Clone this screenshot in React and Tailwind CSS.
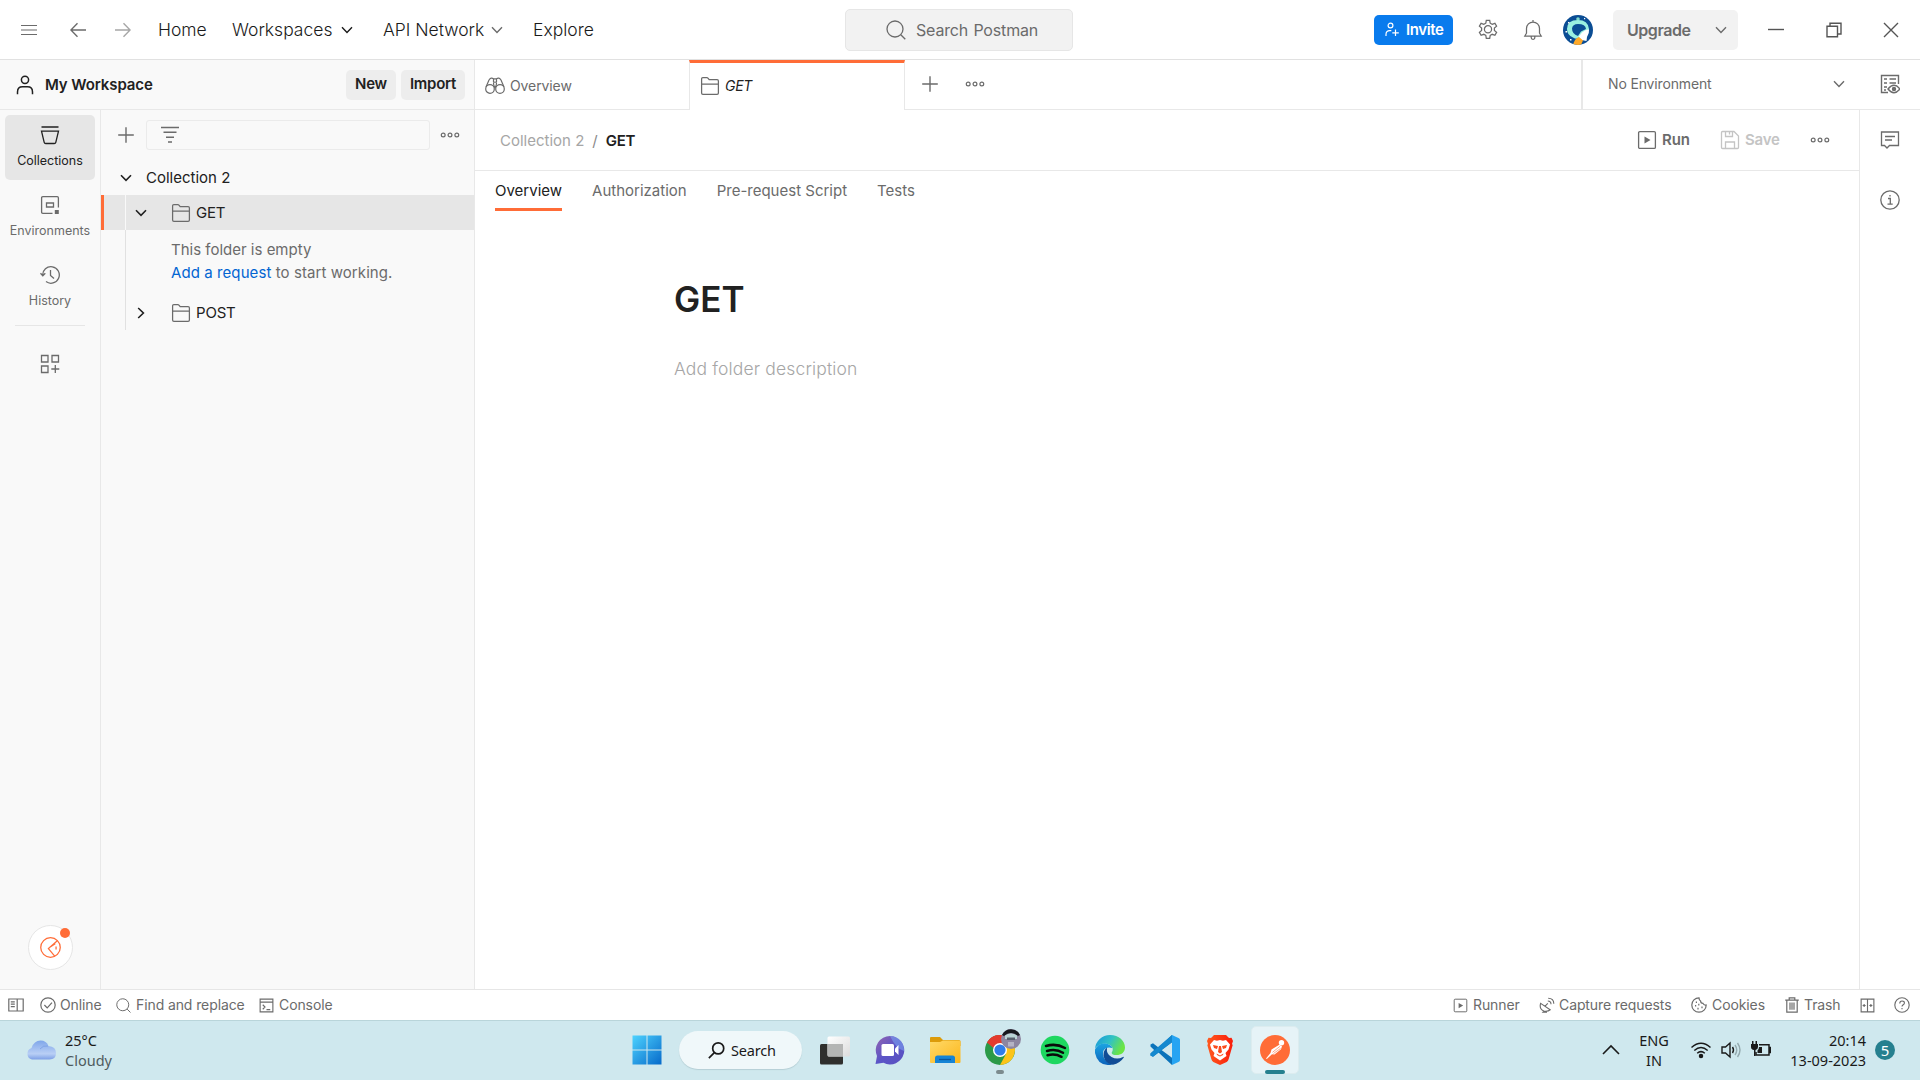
import React from "react";

/* Line icon on a 20x20 grid by default */
function Ico({ s = 20, vb = "0 0 20 20", w = 1.25, c = "", children }) {
  return (
    <svg width={s} height={s} viewBox={vb} fill="none" stroke="currentColor" strokeWidth={w} className={"block shrink-0 " + c}>
      {children}
    </svg>
  );
}

const Chevron = ({ c = "", w = 1.4 }) => (
  <Ico s={12} vb="0 0 12 12" w={w} c={c}><path d="M1 3.2 6 8.4l5-5.2" /></Ico>
);
const Dots = ({ c = "" }) => (
  <Ico c={c} w={1.2}><circle cx="3.2" cy="10" r="1.9" /><circle cx="10" cy="10" r="1.9" /><circle cx="16.8" cy="10" r="1.9" /></Ico>
);
const Plus = ({ c = "" }) => <Ico c={c} w={1.4}><path d="M10 2.2v15.6M2.2 10h15.6" /></Ico>;
const Folder = ({ c = "" }) => (
  <Ico c={c} w={1.25}><path d="M1.6 2.8q0-1.2 1.2-1.2h4.1q.6 0 1 .5l1.3 1.6h7.9q1.3 0 1.3 1.3v12.1q0 1.3-1.3 1.3H2.9q-1.3 0-1.3-1.3zM1.6 8.2h16.8" /></Ico>
);
const PlayBox = ({ s = 20, c = "" }) => (
  <Ico s={s} c={c} w={1.3}><rect x="1.6" y="1.6" width="16.8" height="16.8" rx="1.2" /><path d="M7.5 6.5v7l6-3.5z" fill="currentColor" stroke="none" /></Ico>
);
const SearchIco = ({ s = 20, c = "", w = 1.3 }) => (
  <Ico s={s} c={c} w={w}><circle cx="9" cy="9" r="8" /><path d="m14.8 14.8 4.5 4.5" /></Ico>
);

function TopBar() {
  return (
    <header className="flex h-[60px] shrink-0 items-center border-b border-[#e1e1e1] bg-white text-[17.5px] font-light text-[#1a1a1a]">
      <Ico s={16} vb="0 0 16 16" w={1.2} c="ml-[21px] text-[#6b6b6b]"><path d="M0 3.5h16M0 8h16M0 12.5h16" /></Ico>
      <Ico s={16} vb="0 0 16 16" w={1.4} c="ml-[33px] text-[#6b6b6b]"><path d="M16 8H1M7.5 1.2.9 8l6.6 6.8" /></Ico>
      <Ico s={16} vb="0 0 16 16" w={1.4} c="ml-[29px] text-[#a6a6a6]"><path d="M0 8h15M8.5 1.2 15.1 8l-6.6 6.8" /></Ico>
      <div className="ml-[27px] w-[74px] pt-px">Home</div>
      <div className="w-[109px] pt-px">Workspaces</div>
      <Chevron />
      <div className="ml-[30px] w-[108px] pt-px">API Network</div>
      <Chevron c="text-[#6b6b6b]" />
      <div className="ml-[30px] w-[63px] pt-px">Explore</div>
      <div className="ml-[249px] flex h-[42px] w-[228px] items-center rounded-[5px] border border-[#e6e6e6] bg-[#f2f2f2] pl-[40px] text-[16px] font-normal text-[#6b6b6b]">
        <SearchIco />
        <span className="ml-[10px] tracking-[-0.5px] [word-spacing:1px]"><span className="tracking-[-0.17px]">Search Postman</span></span>
      </div>
      <div className="ml-[301px] flex h-[30px] w-[79px] items-center rounded-[5px] bg-[#097bed] pl-[11px] text-[15px] font-semibold text-white">
        <Ico s={15} vb="0 0 15 15" w={1.2}><circle cx="5.500" cy="3.500" r="2.400" /><path d="M1 14v-1.500Q1 8.600 4.800 8.600h1.500M10.500 7.500v6.500M7.300 10.800h6.500" /></Ico>
        <span className="ml-[6px] pt-px tracking-[-0.4px]">Invite</span>
      </div>
      <Ico s={22} vb="0 0 22 22" c="ml-[24px] text-[#6b6b6b]"><path d="M9.300 1.300h3.400l.5 2.900 2 1.100 2.700-1 1.700 2.900-2.200 1.900v2.400l2.200 1.900-1.700 2.900-2.700-1-2 1.100-.5 2.900H9.300l-.5-2.900-2-1.100-2.700 1-1.700-2.900 2.200-1.900V9.100L2.400 7.200l1.700-2.900 2.700 1 2-1.100z" /><circle cx="11" cy="10.300" r="3.600" /></Ico>
      <Ico s={22} vb="0 0 22 22" c="ml-[23px] text-[#6b6b6b]"><path d="M2.800 17h16.400l-1.700-2.800V9.500a6.500 6.500 0 0 0-13 0v4.700zM11 3V1M9.200 17.300v1.300a1.800 1.800 0 0 0 3.600 0v-1.300" /></Ico>
      <svg width="30" height="30" viewBox="0 0 30 30" className="ml-[19px] shrink-0">
        <defs><clipPath id="av"><circle cx="15" cy="15" r="15" /></clipPath></defs>
        <g clipPath="url(#av)">
          <path d="M0 0h30v30H0z" fill="#0b4d94" />
          <circle cx="15" cy="4" r="1.800" fill="#7fd9cc" />
          <path d="M4 14q0-9 11-9 10 0 11 9l-1 3-8 5q-4 3-7 .5Q4 20 4 14z" fill="#9af0e0" />
          <path d="M9 13.500q.5-4.500 6-4.500 7.500 0 8 5l-5 2.500-3 4.500q-6-2-6-7.500z" fill="#0b4d94" />
          <path d="M15.500 22 19 17.500q4-3.500 7-3 .5 4-2 7.500l-.5 4-5-1z" fill="#fff" />
          <path d="M10 30q1.500-6.500 6-8l4 3.500-2 4.500z" fill="#ffa928" />
          <path d="M5 7h1.500v1.500H5zM2.500 16H4v1.500H2.500zM7 24h1.500v1.500H7zM21 3h1.200v1.200H21z" fill="#fff" />
        </g>
      </svg>
      <div className="ml-[20px] flex h-[40px] w-[125px] items-center rounded-[5px] bg-[#f2f2f2] pl-[14px] text-base font-semibold text-[#6b6b6b]">
        <span className="w-[88px] tracking-[-0.45px]">Upgrade</span><Chevron />
      </div>
      <Ico s={16} vb="0 0 16 16" w={1.4} c="ml-[30px] text-[#555]"><path d="M0 7.500h16" /></Ico>
      <Ico s={16} vb="0 0 16 16" w={1.4} c="ml-[42px] text-[#555]"><path d="M1 4.200h10.500v10.500H1zM4 4V1.200h11V12h-3" /></Ico>
      <Ico s={16} vb="0 0 16 16" w={1.4} c="ml-[41px] text-[#555]"><path d="m1 1 14 14M15 1 1 15" /></Ico>
    </header>
  );
}

function SubBar() {
  return (
    <div className="flex h-[50px] shrink-0 text-[15px] text-[#6b6b6b]">
      <div className="flex w-[475px] items-center border-r border-b border-[#e8e8e8] bg-[#f9f9f9] text-[#212121]">
        <Ico c="ml-[15px]" w={1.5}><circle cx="10" cy="4.800" r="3.600" /><path d="M2.500 19.200V17q0-5.200 5-5.200h5q5 0 5 5.200v2.200" /></Ico>
        <span className="ml-[10px] w-[301px] pt-px font-semibold tracking-[-0.1px]">My Workspace</span>
        <div className="flex h-[30px] w-[50px] items-center justify-center rounded-[5px] bg-[#ededed] font-semibold tracking-[-0.2px]">New</div>
        <div className="ml-[5px] flex h-[30px] w-[64px] items-center justify-center rounded-[5px] bg-[#ededed] font-semibold tracking-[-0.25px]">Import</div>
      </div>
      <div className="flex w-[214px] items-center border-b border-[#e8e8e8] pt-[3px] pl-[10px] text-sm">
        <Ico w={1.2}><circle cx="5" cy="13" r="4.300" /><circle cx="15" cy="13" r="4.300" /><path d="M1 11 4 4q2-3 4.500-1.200h3Q14 1 16 4l3 7M10 12q-3-6 0-6t0 6M8.500 3v3M11.500 3v3" /></Ico>
        <span className="ml-[5px] tracking-[-0.1px]">Overview</span>
      </div>
      <div className="flex w-[216px] items-center border-x border-[#e8e8e8] border-t-[3px] border-t-[#ff6c37] pb-px pl-[10px] text-sm text-[#212121] italic">
        <Folder c="text-[#6b6b6b]" /><span className="ml-[5px] tracking-[-0.3px]">GET</span>
      </div>
      <div className="flex w-[676px] items-center border-b border-[#e8e8e8] pb-px pl-[15px]">
        <Plus /><Dots c="ml-[25px]" />
      </div>
      <div className="flex flex-1 items-center border-b border-l-2 border-[#e8e8e8] pb-px pl-[25px] text-sm">
        <span className="w-[225px] tracking-[-0.15px]">No Environment</span><Chevron />
        <Ico c="ml-[35px]" w={1.4}><path d="M8 18.500H1.500v-17h17V10M4 5h3M9.500 5H16M4 9h3M9.500 9H16M4 13h3M4 16h2" /><path d="M8 15q6-7.500 12 0-6 7.500-12 0z" /><circle cx="14" cy="15" r="1.500" fill="currentColor" /></Ico>
      </div>
    </div>
  );
}

function RailItem({ label, active, children }) {
  return (
    <div className={"mb-[5px] ml-[5px] flex h-[65px] w-[90px] flex-col items-center rounded-[5px] pt-[10px] text-[12.5px] whitespace-nowrap " + (active ? "bg-[#e6e6e6] text-[#212121]" : "text-[#6b6b6b]")}>
      {children}
      <span className="mt-[6px] leading-5">{label}</span>
    </div>
  );
}

function Rail() {
  return (
    <nav className="flex w-[101px] shrink-0 flex-col border-r border-[#e8e8e8] bg-[#f9f9f9] pt-[5px]">
      <RailItem label="Collections" active>
        <Ico w={1.3}><path d="M1.500 2h17M1.500 6.200h17l-2.700 11.100q-.3 1.200-1.500 1.200H5.700q-1.200 0-1.500-1.200z" /></Ico>
      </RailItem>
      <RailItem label="Environments">
        <Ico w={1.3}><path d="M12.500 18.300H2.800q-1.200 0-1.200-1.200V2.900q0-1.200 1.200-1.200h14.400q1.200 0 1.200 1.200v9.600M6.500 8h7v4h-7z" /><path d="M14.800 15h4v4h-4z" fill="currentColor" stroke="none" /></Ico>
      </RailItem>
      <RailItem label="History">
        <Ico w={1.3}><path d="M2.700 10.500A8.300 8.300 0 1 1 6 16.600M.5 8.300l2.300 2.500 2.500-2.500M10.500 5v5.500l3.500 3" /></Ico>
      </RailItem>
      <div className="ml-[15px] h-px w-[70px] bg-[#e6e6e6]" />
      <Ico c="mt-[28px] ml-[40px] text-[#6b6b6b]" w={1.3}><path d="M1.500 1.500h6.500V8H1.500zM12 1.500h6.500V8H12zM1.500 12h6.500v6.500H1.500zM15.300 11v8M11.300 15h8" /></Ico>
      <div className="relative mt-auto mb-[19px] ml-[28px] flex size-[45px] items-center justify-center rounded-full border border-[#e6e6e6] bg-white text-[#ff6c37]">
        <Ico s={21} w={1.2} c="-ml-px"><circle cx="10" cy="10" r="9.300" /><path d="M16.500 3.500 8 11l6 7.300M9 10l5.500-3.700M15.300 9v3" /></Ico>
        <span className="absolute top-[2px] right-[2px] size-[10px] rounded-full bg-[#ff6c37]" />
      </div>
    </nav>
  );
}

function Sidebar() {
  return (
    <aside className="flex w-[374px] shrink-0 flex-col border-r border-[#e8e8e8] bg-[#f9f9f9] pt-[10px] text-[15px] text-[#212121]">
      <div className="flex h-[30px] items-center text-[#6b6b6b]">
        <Plus c="ml-[15px]" />
        <div className="ml-[10px] flex h-[30px] w-[284px] items-center rounded-[3px] border border-[#ebebeb] pl-[13px]">
          <Ico w={1.5}><path d="M1 2.500h18M3.500 7.300h13M6 12.200h8M8 17h4" /></Ico>
        </div>
        <Dots c="ml-[10px]" />
      </div>
      <div className="mt-[10px] flex h-[35px] items-center pt-px">
        <Chevron c="ml-[19px]" w={1.6} /><span className="ml-[14px] pt-px">Collection 2</span>
      </div>
      <div className="flex h-[35px] items-center border-l-[3px] border-[#ff6c37] bg-[#e6e6e6]">
        <div className="ml-[21px] h-full w-px bg-[#f9f9f9]" />
        <Chevron c="ml-[9px]" w={1.6} />
        <Folder c="ml-[24px] text-[#6b6b6b]" /><span className="ml-[5px] pt-px tracking-[-0.2px]">GET</span>
      </div>
      <div className="ml-[24px] flex h-[100px] flex-col border-l border-[#e1e1e1]">
        <p className="mt-[8px] ml-[45px] leading-[23px] text-[#6b6b6b]">This folder is empty<br /><span className="tracking-[0.08px]"><span className="text-[#0265d2]">Add a request</span> to start working.</span></p>
        <div className="mt-auto flex h-[35px] items-center">
          <Chevron c="ml-[9px] -rotate-90" w={1.6} />
          <Folder c="ml-[24px] text-[#6b6b6b]" /><span className="ml-[5px] pt-px tracking-[-0.2px]">POST</span>
        </div>
      </div>
    </aside>
  );
}

function Main() {
  return (
    <main className="flex flex-1 flex-col text-[15px] text-[#6b6b6b]">
      <div className="flex h-[61px] items-center border-b border-[#e8e8e8] pl-[25px]">
        <span className="pt-[2px] text-[#a6a6a6]">Collection 2</span><span className="ml-[8px] pt-[2px] text-[#8a8a8a]">/</span>
        <span className="ml-[8px] pt-[2px] font-semibold tracking-[-0.2px] text-[#212121]">GET</span>
        <PlayBox c="ml-auto" /><span className="ml-[5px] w-[58px] font-semibold tracking-[-0.1px]">Run</span>
        <Ico c="text-[#c4c4c4]" w={1.3}><path d="M1.500 2.500q0-1 1-1H14l4.500 4.500v11.500q0 1-1 1h-15q-1 0-1-1zM5.500 1.500v5h7v-5M9.500 2v2.500M5.500 18.500V12h9v6.500" /></Ico>
        <span className="ml-[5px] w-[65px] font-semibold tracking-[-0.2px] text-[#c4c4c4]">Save</span>
        <Dots c="mr-[29px]" />
      </div>
      <div className="flex h-[40px] gap-[30px] pl-[20px] leading-[40px]">
        <span className="border-b-[3px] border-[#ff6c37] text-[#212121]">Overview</span>
        <span>Authorization</span><span>Pre-request Script</span><span>Tests</span>
      </div>
      <h1 className="mt-[68px] ml-[199px] text-[35px] leading-[40px] font-semibold text-[#212121]">GET</h1>
      <p className="mt-[36px] ml-[199px] text-[17.5px] leading-[27px] font-light tracking-[0.15px] text-[#a6a6a6]">Add folder description</p>
    </main>
  );
}

function RightRail() {
  return (
    <div className="flex w-[61px] shrink-0 flex-col items-center gap-[40px] border-l border-[#e8e8e8] pt-[20px] text-[#6b6b6b]">
      <Ico w={1.3}><path d="M1.500 2h17v13.500h-9L7 18l-2.500-2.500h-3zM5 6.500h10M5 10h7" /></Ico>
      <Ico w={1.3}><circle cx="10" cy="10" r="9.200" /><path d="M8 8.500h2.300V14M7.500 14.200h5.200M10 5v1.600" /></Ico>
    </div>
  );
}

function StatusBar() {
  return (
    <div className="flex h-[31px] shrink-0 items-center border-t border-[#e6e6e6] bg-white text-sm tracking-[-0.1px] text-[#6b6b6b]">
      <Ico s={16} c="ml-[8px]" w={1.5}><path d="M1 2.500h18v15H1zM11.500 2.500v15M3.500 6h5M3.500 9h5M3.500 12h5" /></Ico>
      <Ico s={16} c="ml-[16px]" w={1.5}><circle cx="10" cy="10" r="9" /><path d="m5.500 10 3.500 3.500 6-6.500" /></Ico>
      <span className="ml-[4px] w-[56px]">Online</span>
      <SearchIco s={15} /><span className="ml-[5px] w-[123px]">Find and replace</span>
      <Ico s={15} w={1.5}><path d="M1.500 1.500h17v17h-17zM1.500 5.500h17M5 9l3 3-3 3M10 15.500h5" /></Ico>
      <span className="ml-[5px]">Console</span>
      <PlayBox s={15} c="ml-auto" /><span className="ml-[5px] w-[66px]">Runner</span>
      <Ico s={16} w={1.4}><path d="M2 8q-2 7 4 9.500 5 1 8-1.500zM7 12l4-4M6.500 17.500 5 19h5M11 5q4 0 4 4M11.500 1.500q7 0 7 7" /></Ico>
      <span className="ml-[4px] w-[132px]">Capture requests</span>
      <Ico s={16} w={1.5}><path d="M10 1a9 9 0 1 0 9 9q-3 .5-4-2-3 0-3-3-2-1-2-4z" /><path d="M6 6.500h1.500M5 11h1.500M9 9.500h1.500M8 14.500h1.500M13 13h1.500" strokeWidth="2" /></Ico>
      <span className="ml-[5px] w-[72px]">Cookies</span>
      <Ico s={16} w={1.5}><path d="M1.500 4h17M6.500 4V1h7v3M3.500 4v15h13V4M7.500 7v9M10 7v9M12.500 7v9" /></Ico>
      <span className="ml-[4px] w-[56px]">Trash</span>
      <Ico s={15} w={1.5}><path d="M1.500 1.500h17v17h-17zM10 1.500v17M5.500 8v4M3.500 10h4M14.500 8v4M12.500 10h4" /></Ico>
      <Ico s={16} c="mr-[10px] ml-[19px]" w={1.4}><circle cx="10" cy="10" r="9" /><path d="M7.200 8q0-3 2.900-3t2.900 2.600q0 1.200-1.500 2.200T10 12M10 13.800v1.500" /></Ico>
    </div>
  );
}

function WinLogo() {
  return (
    <svg width="30" height="30" viewBox="0 0 30 30" className="shrink-0">
      <defs><linearGradient id="win" x1="0" y1="0" x2="30" y2="30" gradientUnits="userSpaceOnUse"><stop stopColor="#4fd4ff" /><stop offset="1" stopColor="#0568c9" /></linearGradient></defs>
      <path d="M.5.5h14v14H.5zM15.500.5h14v14h-14zM.5 15.500h14v14H.5zM15.500 15.500h14v14h-14z" fill="url(#win)" />
    </svg>
  );
}

function Taskbar() {
  return (
    <footer className="flex h-[60px] shrink-0 items-center border-t border-[#b9d5da] bg-[#cfe8ee] pb-px font-['Noto_Sans','Open_Sans',sans-serif] text-[14.5px] leading-[20px] text-[#1a1a1a]">
      <svg width="30" height="20" viewBox="0 0 30 20" className="ml-[26px] shrink-0">
        <defs><linearGradient id="cl" x1="0" y1="0" x2="0" y2="1"><stop stopColor="#7fa6ea" /><stop offset=".7" stopColor="#b9cff5" /><stop offset="1" stopColor="#7d9fe6" /></linearGradient></defs>
        <path d="M6 19.500a6 6 0 0 1-.5-11.500Q8 .5 14.500.5q6 0 8 5.500 7.500.5 7.500 7t-6.500 6.500z" fill="url(#cl)" />
        <path d="M14 9q3-4 8-3" stroke="#6d95e0" fill="none" opacity=".6" />
      </svg>
      <div className="ml-[9px] w-[567px]">25°C<br /><span className="text-[#4f5b5e]">Cloudy</span></div>
      <WinLogo />
      <div className="ml-[17px] flex h-[38px] w-[123px] items-center rounded-full bg-[#f0f8fa] pl-[29px] shadow-[0_1px_1px_#b5cfd5]">
        <Ico s={17} w={2}><circle cx="12" cy="7.500" r="6.500" /><path d="m7.500 12.500-6.500 6.500" /></Ico>
        <span className="ml-[6px] tracking-[-0.2px]">Search</span>
      </div>
      <svg width="30" height="29" viewBox="0 0 30 29" className="ml-[18px] shrink-0">
        <defs><linearGradient id="tv" x1="0" y1="0" x2="1" y2="1"><stop stopColor="#fff" /><stop offset="1" stopColor="#dcdcdc" /></linearGradient></defs>
        <rect y="8" width="23" height="20.500" rx="1.500" fill="#2f2f2d" />
        <rect x="7.500" y=".5" width="22.500" height="20" rx="1.500" fill="url(#tv)" />
        <path d="M7.500 8H23v12.500H9q-1.500 0-1.500-1.500z" fill="#b4b5b4" />
      </svg>
      <svg width="30" height="30" viewBox="0 0 30 30" className="ml-[25px] shrink-0">
        <defs><linearGradient id="ch" x1="0" y1="0" x2="1" y2="1"><stop stopColor="#9564b0" /><stop offset=".5" stopColor="#5b55c7" /><stop offset="1" stopColor="#5a50c0" /></linearGradient></defs>
        <path d="M15 1a14.200 14.200 0 1 1-6.500 26.800L.5 29l1.500-8A14.200 14.200 0 0 1 15 1z" fill="url(#ch)" />
        <path d="M15 1a14.200 14.200 0 0 1 14 15q-8-2-14-15z" fill="#7aa0f0" opacity=".6" />
        <rect x="6.500" y="9" width="12.500" height="12" rx="1.500" fill="#fff" /><path d="m20 13.500 3.500-3.500v10L20 16.500z" fill="#fff" />
      </svg>
      <svg width="31" height="28" viewBox="0 0 31 28" className="ml-[25px] shrink-0">
        <defs><linearGradient id="fo" x1="0" y1="0" x2="1" y2="1"><stop stopColor="#ffd968" /><stop offset="1" stopColor="#fcb71c" /></linearGradient></defs>
        <path d="M0 2q0-1 1-1h9l3 3h16q1.500 0 1.500 1.500V10H0z" fill="#dc9b0a" />
        <path d="M0 6h10l3-1.500h16.500q1 0 1 1v20.500q0 1-1 1H1q-1 0-1-1z" fill="url(#fo)" />
        <path d="M5 27v-5q0-2.500 2.500-2.500h15q2.500 0 2.500 2.500v5z" fill="#1684d5" /><path d="M9 23.500h12" stroke="#0b569d" strokeWidth="1.300" />
      </svg>
      <div className="relative ml-[24px] h-[30px] w-[30px] shrink-0">
        <svg width="30" height="30" viewBox="0 0 30 30">
          <circle cx="15" cy="15" r="15" fill="#2b9a48" />
          <path d="M15 15 2 7.500A15 15 0 0 1 28 7.500L21.500 11z" fill="#e33b2e" />
          <path d="M15 8.500h13.500A15 15 0 0 1 15 30l6-11z" fill="#fcc419" />
          <path d="M2 7.500 9 19l6-4V8.500z" fill="#2b9a48" /><path d="M2 7.500A15 15 0 0 1 15 0v8.500L8.500 13z" fill="#e33b2e" />
          <circle cx="15" cy="15" r="7" fill="#fff" /><circle cx="15" cy="15" r="5.600" fill="#2f7de9" />
        </svg>
        <svg width="20" height="20" viewBox="0 0 20 20" className="absolute -top-[6px] left-[16px]">
          <circle cx="10" cy="10" r="10" fill="#8d86a0" /><path d="M1 6a10 10 0 0 1 18 0l-2 1Q10 1 3 7z" fill="#17181d" />
          <path d="M4 6.500q6-4 12 0v3.500H4z" fill="#b9d3d4" /><path d="M6 8.500h8V11H6z" fill="#59606e" /><path d="M7 13h6v4.500H7z" fill="#b5b3c4" />
        </svg>
        <span className="absolute top-[35px] left-[11px] h-[4px] w-[8px] rounded-full bg-[#7c8b8e]" />
      </div>
      <svg width="30" height="30" viewBox="0 0 30 30" className="ml-[25px] shrink-0">
        <circle cx="15" cy="15" r="14.300" fill="#1ed760" />
        <path d="M6 11q10-3 19 2M7 16q9-2.500 16 1.800M7.500 20.300q7.500-2 14 1.500" fill="none" stroke="#0a0a0a" strokeWidth="2.500" strokeLinecap="round" />
      </svg>
      <svg width="30" height="30" viewBox="0 0 30 30" className="ml-[25px] shrink-0">
        <defs>
          <linearGradient id="e1" x1="0" y1="0" x2="1" y2=".4"><stop stopColor="#1795df" /><stop offset=".55" stopColor="#32c2c3" /><stop offset="1" stopColor="#6be544" /></linearGradient>
          <linearGradient id="e2" x1="0" y1="0" x2="0" y2="1"><stop stopColor="#1ca4e2" /><stop offset="1" stopColor="#0c62bb" /></linearGradient>
        </defs>
        <path d="M0 14A15 15 0 0 1 15 0c9 0 15 6 15 12.500 0 5-4 7.500-8.500 7.500-4 0-5.500-1.500-4.500-3s1.500-5-2-7S3 8 0 14z" fill="url(#e1)" />
        <path d="M0 14.500Q3 8 10 8.500q6 .5 7.500 4.500-6-2-9 2.500-2 7 4 11.500 3 2.500 5 2.700Q3 32 0 18z" fill="url(#e2)" />
        <path d="M12 12.500q-4 3-3.500 8.500 2 8.500 9.500 8.700 7-1.500 10.800-7.200.3-1-.8-.5-6 3-11.500 0T12 12.500z" fill="#114c96" />
      </svg>
      <svg width="30" height="30" viewBox="0 0 30 30" className="ml-[25px] shrink-0">
        <path d="M22 0 8.500 12.500 3 8.200.5 9.500v2l3.600 3.600L.5 18.500v2L3 21.800l5.500-4.300L22 30l1-6.500L11.500 15 23 6.500z" fill="#0b73ba" />
        <path d="M23 6.500 3 21.800l-2.500-1.300v-2L22 0z" fill="#1489cf" />
        <path d="m22 0 7 3.200q1 .5 1 1.800v20q0 1.300-1 1.800L22 30z" fill="#26a4f2" />
      </svg>
      <svg width="30" height="30" viewBox="0 0 30 30" className="ml-[25px] shrink-0">
        <defs><linearGradient id="br"><stop stopColor="#ff5a1f" /><stop offset="1" stopColor="#f91d0b" /></linearGradient></defs>
        <path d="M9 0h12l3 3 2.500-.3L28 6l-1 3 .7 1-4 14q-.5 2-2 3L15 30l-6.700-3q-1.500-1-2-3l-4-14 .7-1-1-3 1.500-3.300L6 3z" fill="url(#br)" />
        <path d="m9 5 3 .7 3-.7 3 .7 3-.7 4 4.500-1.500 5-3 3.500 1 3-6.500 4.500L8.500 21l1-3-3-3.500L5 9.500z" fill="#fff" />
        <path d="m8 10 5 1-1 3-3-1zM22 10l-5 1 1 3 3-1zM14 11h2l1 6-2 1.500-2-1.500zM11.500 18.500l3.500 2 3.500-2-.5 1.500-3 1.500-3-1.500z" fill="#fb4a1b" />
      </svg>
      <div className="relative ml-[16px] flex size-[48px] shrink-0 items-center justify-center rounded-[5px] border border-[#dcecef] bg-[#e6f3f7]">
        <svg width="30" height="30" viewBox="0 0 30 30">
          <circle cx="15" cy="15" r="15" fill="#ff6c37" />
          <circle cx="21.500" cy="7.800" r="2.700" fill="#fff" />
          <path d="M19.300 9.800 22 11.300l-1 3-6.500 5.200-2.500-.3L6.800 24l-.8-.6 4.500-5.400 1-3.500z" fill="#fff" />
          <path d="m12.500 17.300 7.500-6M13.500 18.500l7-5" stroke="#ff6c37" strokeWidth=".6" />
        </svg>
        <span className="absolute top-[43px] left-[13px] h-[4px] w-[20px] rounded-full bg-[#26808f]" />
      </div>
      <Ico s={18} vb="0 0 18 18" w={1.6} c="ml-auto"><path d="m1 13 8-8 8 8" /></Ico>
      <div className="ml-[14px] w-[40px] text-center">ENG<br />IN</div>
      <Ico c="ml-[17px]" w={1.5}><path d="M.5 7.500q9.500-8.500 19 0M3.300 10.500q6.700-6 13.400 0M6.200 13.300q3.800-3.300 7.600 0" /><circle cx="10" cy="16" r="1.500" fill="currentColor" /></Ico>
      <Ico c="ml-[10px]" w={1.4}><path d="M1 7h3.500L9 3v14l-4.500-4H1z" /><path d="M11.500 7q2 3 0 6" /><path d="M14 5q3.500 5 0 10M16.500 3q5 7 0 14" stroke="#94aaaf" /></Ico>
      <Ico c="ml-[10px]" w={1.5}><path d="M8 4.800h10V15H5v-3M18.500 7.500h1v5h-1" /><path d="M8 7h3v6H6.500v-2.500Q8 9 8 7zM0 4h7v3q0 2.500-2.500 3v6h-1.500v-6Q0 9.500 0 7zM1 1h1.500v3H1zM4.500 1H6v3H4.500z" fill="currentColor" stroke="none" /></Ico>
      <div className="w-[95px] text-right">20:14<br />13-09-2023</div>
      <div className="mr-[25px] ml-[9px] flex size-5 items-center justify-center rounded-full bg-[#26808f] text-[15px] text-white">5</div>
    </footer>
  );
}

export default function App() {
  return (
    <div className="flex h-[1080px] w-[1920px] flex-col overflow-hidden bg-white font-['Inter',sans-serif] whitespace-nowrap">
      <TopBar />
      <SubBar />
      <div className="flex min-h-0 flex-1"><Rail /><Sidebar /><Main /><RightRail /></div>
      <StatusBar />
      <Taskbar />
    </div>
  );
}
